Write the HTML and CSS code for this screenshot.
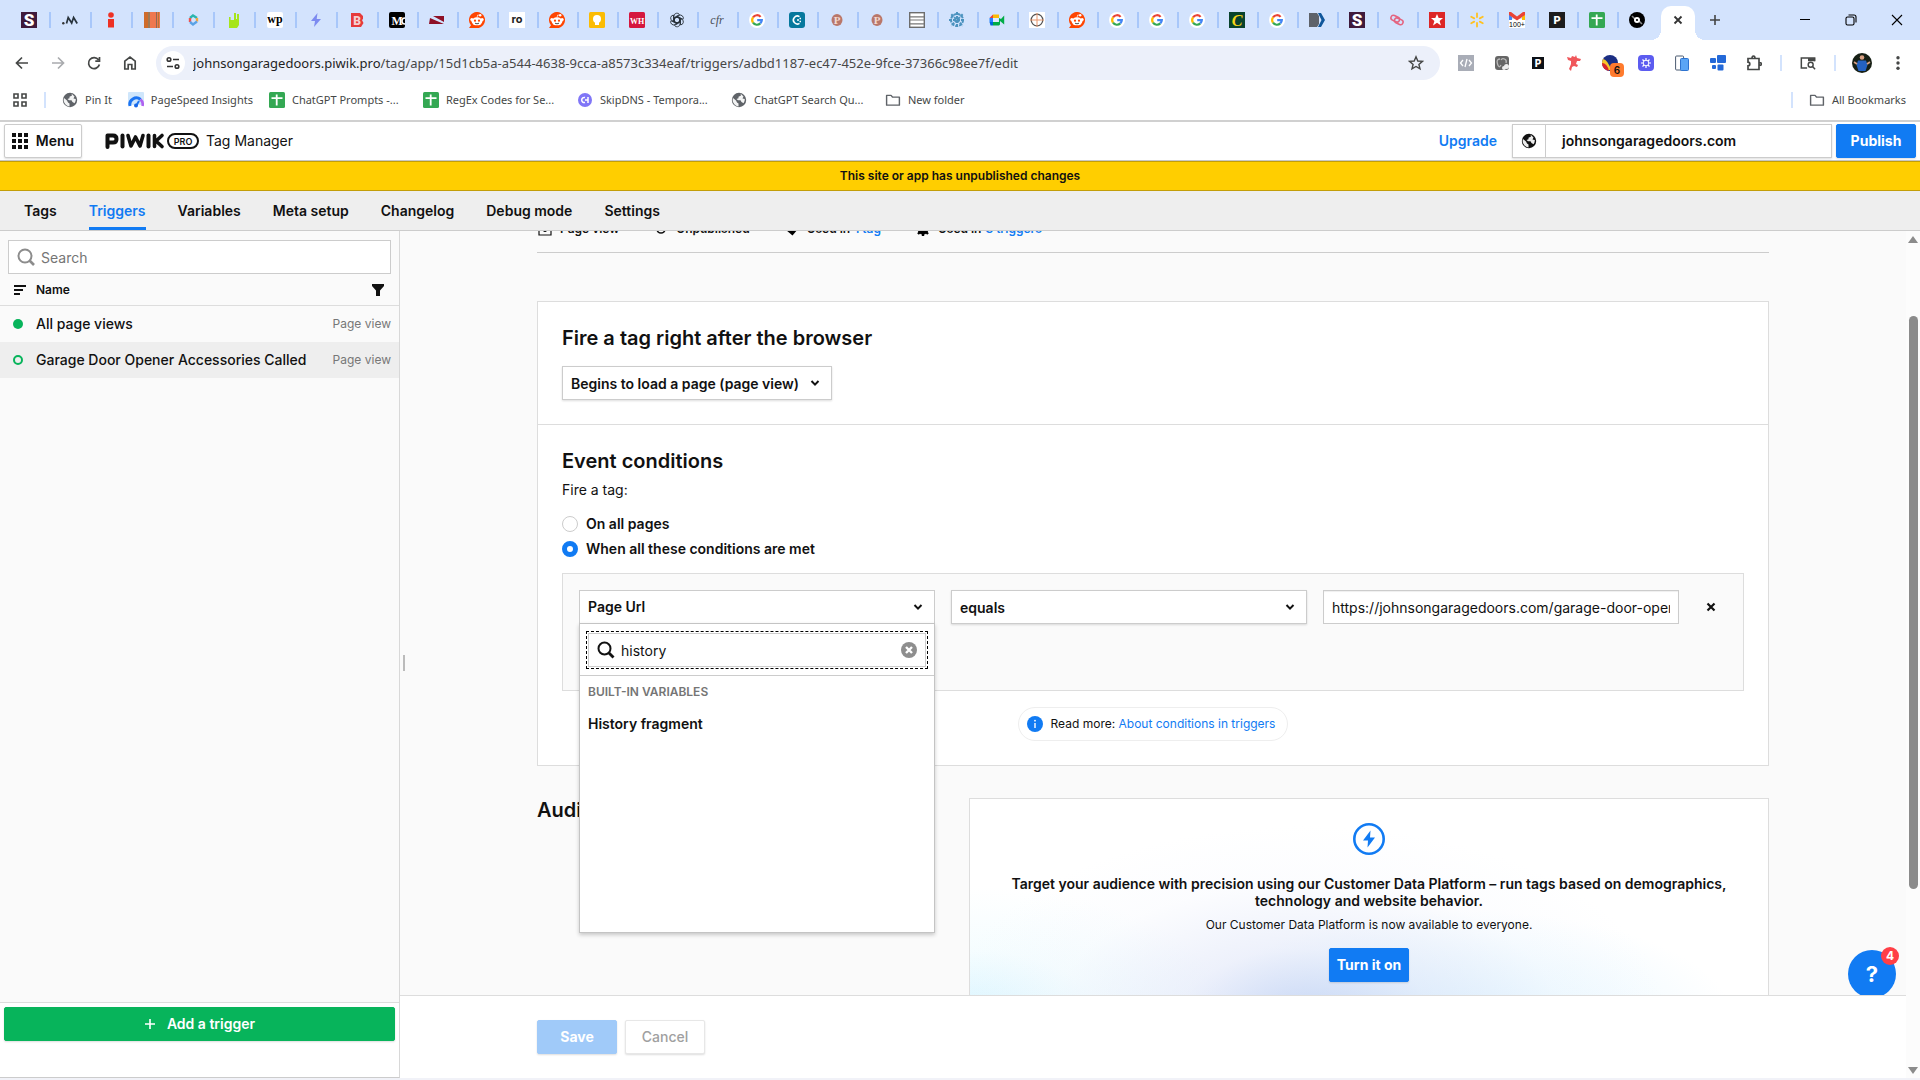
FILE: index.html
```html
<!DOCTYPE html>
<html lang="en">
<head>
<meta charset="utf-8">
<meta name="viewport" content="width=device-width, initial-scale=1">
<title>Piwik PRO Tag Manager</title>
<link rel="stylesheet" href="styles.css">
</head>
<body>
<svg class="sprite" aria-hidden="true">
  <symbol id="s-logo" viewBox="0 0 16 16"><rect width="16" height="16" fill="#3f1a3b"/><text x="8" y="14" text-anchor="middle" font-family="Roboto, sans-serif" font-weight="900" font-size="17" fill="#fff">S</text></symbol>
  <symbol id="google" viewBox="0 0 16 16"><circle cx="8" cy="8" r="8" fill="#fff"/><g fill="none" stroke-width="2.2"><path d="M4 5.3A4.8 4.8 0 0 1 11.6 4.9" stroke="#ea4335"/><path d="M4 10.7A4.9 4.9 0 0 1 4 5.3" stroke="#fbbc04"/><path d="M11.3 11.4A4.8 4.8 0 0 1 4 10.7" stroke="#34a853"/><path d="M8.2 8.2H12.8A4.8 4.8 0 0 1 11.3 11.4" stroke="#4285f4"/></g></symbol>
  <symbol id="reddit" viewBox="0 0 16 16"><path d="M0 16L2 13.3A8 8 0 1 1 8 16Z" fill="#ff4500"/><ellipse cx="8" cy="9.3" rx="5.4" ry="4" fill="#fff"/><circle cx="2.8" cy="7.4" r="1.5" fill="#fff"/><circle cx="13.2" cy="7.4" r="1.5" fill="#fff"/><circle cx="11.2" cy="3.2" r="1.2" fill="#fff"/><path d="M8 5.6L8.7 3L11 3.3" fill="none" stroke="#fff" stroke-width=".7"/><circle cx="6" cy="8.7" r="1.1" fill="#ff4500"/><circle cx="10" cy="8.7" r="1.1" fill="#ff4500"/><path d="M6 11.2Q8 12.4 10 11.2" fill="none" stroke="#222" stroke-width=".8"/></symbol>
  <symbol id="sheets" viewBox="0 0 16 16"><rect width="16" height="16" rx="1.5" fill="#34a853"/><path d="M2.5 6.2H13.5M7.7 2.5V13.5" stroke="#fff" stroke-width="1.8"/></symbol>
  <symbol id="globe" viewBox="0 0 16 16"><circle cx="8" cy="8" r="7.2" fill="currentColor"/><path d="M2 6L5 8.5L6 10.5L7.5 11.5V14.4A6.5 6.5 0 0 1 1.6 8ZM9.5 1.6L10 3.5L7.5 4.8V6.2L5.5 7L7 8.3H9.5L10.5 10L12.5 11.2A6 6 0 0 0 13.8 7L11.5 6.5L12.5 4.5Z" fill="#fff" opacity=".92"/></symbol>
  <symbol id="folder" viewBox="0 0 18 16"><path d="M1.8 2.8H6.8L8.6 4.8H16.2V13.8H1.8Z" fill="none" stroke="currentColor" stroke-width="1.6" stroke-linejoin="round"/></symbol>
  <symbol id="chevron" viewBox="0 0 10 10"><path d="M1.5 3L5 6.6L8.5 3" fill="none" stroke="currentColor" stroke-width="2"/></symbol>
  <symbol id="p-seal" viewBox="0 0 16 16"><ellipse cx="8" cy="8" rx="5.5" ry="6" fill="#b9776a"/><text x="8" y="12" text-anchor="middle" font-family="Liberation Serif, serif" font-weight="700" font-size="11" fill="#f3d9d3">P</text></symbol>
</svg>

<div class="tabstrip">
  <ul class="tabs">
    <li><svg><use href="#s-logo"/></svg></li>
    <li><svg viewBox="0 0 16 16"><circle cx="1.3" cy="11.3" r="1.2" fill="#333"/><path d="M4.5 11.5L6.2 5.5L9.7 11L11.6 5.5L15.2 11.5" fill="none" stroke="#28333c" stroke-width="1.7"/></svg></li>
    <li><svg viewBox="0 0 16 16"><circle cx="8" cy="3" r="2.8" fill="#ee3124"/><path d="M5 7H11V15.5H5Z" fill="#ee3124"/></svg></li>
    <li><svg viewBox="0 0 16 16"><rect width="16" height="16" fill="#ee7850"/><path d="M1 0V16M3 0V16" stroke="#c2671c" stroke-width="1.4"/><path d="M5 0V16" stroke="#7d7a55" stroke-width="1.4"/><path d="M12.5 0V16" stroke="#8e6a56" stroke-width="1"/><path d="M14.5 0V16" stroke="#b77a33" stroke-width="1"/></svg></li>
    <li><svg viewBox="0 0 16 16"><path d="M5 6L8 3.4L12 6" fill="none" stroke="#2bb5ad" stroke-width="2.4"/><path d="M12 6V9.5" stroke="#f4a63a" stroke-width="2.4"/><path d="M5 6V10" stroke="#ef5350" stroke-width="2.4"/><path d="M5 10L8 12.4L12 9.5" fill="none" stroke="#5aa2e6" stroke-width="2.4"/></svg></li>
    <li><svg viewBox="0 0 16 16"><path d="M3 5H4.600V8H8V1H10V7H11V2H13V13L11 16H3Z" fill="#a6e51b"/></svg></li>
    <li><svg viewBox="0 0 16 16"><rect width="16" height="16" rx="2" fill="#fff"/><text x="8" y="11" text-anchor="middle" font-family="Liberation Serif, serif" font-weight="700" font-size="12">wp</text></svg></li>
    <li><svg viewBox="0 0 16 16"><path d="M9.500 1L3 9H7L6 15L13 7H8.700Z" fill="#7d8bf0"/></svg></li>
    <li><svg viewBox="0 0 16 16"><path d="M2 1H11L14 4V7L13 8L14.500 11L12 15H2Z" fill="#e63b3b"/><text x="8" y="12.500" text-anchor="middle" font-family="Roboto, sans-serif" font-weight="900" font-size="12" fill="#f7cfd0">B</text></svg></li>
    <li><svg viewBox="0 0 16 16"><rect width="16" height="16" rx="2" fill="#000"/><text x="2.500" y="12.500" font-family="Liberation Serif, serif" font-weight="700" font-size="12" fill="#fff">M</text><path d="M16 6A3 3 0 0 0 16 12" fill="none" stroke="#fff" stroke-width="1.500"/></svg></li>
    <li><svg viewBox="0 0 16 16"><path d="M1 6L15 12H0ZM4 4H15V10Z" fill="#8e1026"/></svg></li>
    <li><svg><use href="#reddit"/></svg></li>
    <li><svg viewBox="0 0 16 16"><rect width="16" height="16" fill="#fff"/><text x="8" y="11" text-anchor="middle" font-family="Inter, sans-serif" font-weight="700" font-size="11" fill="#222">ro</text></svg></li>
    <li><svg><use href="#reddit"/></svg></li>
    <li><svg viewBox="0 0 16 16"><rect width="16" height="16" rx="1.500" fill="#fbbc04"/><circle cx="8" cy="7" r="4" fill="#fff"/><path d="M6 10H10V13H6Z" fill="#fff"/></svg></li>
    <li><svg viewBox="0 0 16 16"><rect width="16" height="16" rx="1.500" fill="#d5173e"/><text x="8" y="11.500" text-anchor="middle" font-family="Liberation Serif, serif" font-weight="700" font-size="8" fill="#fff">WH</text></svg></li>
    <li><svg viewBox="0 0 16 16" fill="none" stroke="#222b33" stroke-width=".8"><path id="petal" d="M5 9.700V4A3 3 0 0 1 10.500 2.500L5.500 5.400V9.700L8 11.200"/><use href="#petal" transform="rotate(60 8 8)"/><use href="#petal" transform="rotate(120 8 8)"/><use href="#petal" transform="rotate(180 8 8)"/><use href="#petal" transform="rotate(240 8 8)"/><use href="#petal" transform="rotate(300 8 8)"/></svg></li>
    <li><svg viewBox="0 0 16 16"><text x="8" y="11.500" text-anchor="middle" font-family="Liberation Serif, serif" font-style="italic" font-size="12" fill="#4b5059">cfr</text></svg></li>
    <li><svg><use href="#google"/></svg></li>
    <li><svg viewBox="0 0 16 16"><rect width="16" height="16" rx="3" fill="#06789d"/><path d="M10.500 4.600A4 4 0 1 0 10.500 11.400" fill="none" stroke="#fff" stroke-width="1.500"/><path d="M8 8H10M10.500 6.500H12M10.500 9.500H12" stroke="#fff" stroke-width="1.400"/></svg></li>
    <li><svg><use href="#p-seal"/></svg></li>
    <li><svg><use href="#p-seal"/></svg></li>
    <li><svg viewBox="0 0 16 16"><rect x=".7" y=".7" width="14.600" height="14.600" fill="#fff" stroke="#6d6d6d" stroke-width="1.400"/><path d="M1 4.800H15M1 8H15M1 11.800H15" stroke="#777" stroke-width="1.200"/></svg></li>
    <li><svg viewBox="0 0 16 16" stroke="#4c93bf" stroke-width="2" stroke-dasharray="3 1"><path d="M8 0V16M0 8H16M2.300 2.300L13.700 13.700M13.700 2.300L2.300 13.700"/><circle cx="8" cy="8" r="6" fill="none"/></svg></li>
    <li><svg viewBox="0 0 16 16"><path d="M4 2.500H10V6H4Z" fill="#fbbc04"/><path d="M.5 6L4 2.500V6Z" fill="#ea4335"/><path d="M.5 6H4V10H.5Z" fill="#2684fc"/><path d="M.5 10H4V13.500H1.500Z" fill="#0066da"/><path d="M4 10H10V6L12 7L15.200 3.500V12.500L11 9V12.500L10 13.500H4Z" fill="#00ac47"/><path d="M4 6H9V10H4Z" fill="#dfeaff"/></svg></li>
    <li><svg viewBox="0 0 16 16"><rect width="16" height="16" fill="#fff"/><circle cx="8" cy="8" r="5.800" fill="none" stroke="#555" stroke-width="1.300"/><path d="M8 1V15M1 8H15" stroke="#e8956d" stroke-width="1"/></svg></li>
    <li><svg><use href="#reddit"/></svg></li>
    <li><svg><use href="#google"/></svg></li>
    <li><svg><use href="#google"/></svg></li>
    <li><svg><use href="#google"/></svg></li>
    <li><svg viewBox="0 0 16 16"><rect width="16" height="16" fill="#09432c"/><text x="8" y="13.500" text-anchor="middle" font-family="Liberation Serif, serif" font-style="italic" font-weight="700" font-size="16" fill="#f5d516">C</text></svg></li>
    <li><svg><use href="#google"/></svg></li>
    <li><svg viewBox="0 0 16 16"><path d="M0 1H8L10 4V12L8 15H0Z" fill="#5e6269"/><path d="M9 1H12L16 8L12 15H9L12.500 8Z" fill="#10579b"/></svg></li>
    <li><svg><use href="#s-logo"/></svg></li>
    <li><svg viewBox="0 0 16 16" fill="none" stroke="#e4637f" stroke-width="1.500"><rect x="2" y="4" width="9" height="5" rx="2.500" transform="rotate(25 6 6)"/><rect x="5" y="7" width="9" height="5" rx="2.500" transform="rotate(25 10 10)"/></svg></li>
    <li><svg viewBox="0 0 16 16"><rect width="16" height="16" fill="#dd2626"/><path d="M8 2L9.700 6H14L10.600 8.900L12 13.500L8 10.800L4 13.500L5.400 8.900L2 6H6.300Z" fill="#fff"/></svg></li>
    <li><svg viewBox="0 0 16 16" stroke="#ffc220" stroke-width="1.800" stroke-linecap="round"><path d="M8 1.500V5M8 11V14.500M2.200 4.800L5.200 6.400M10.800 9.600L13.800 11.200M2.200 11.200L5.200 9.600M10.800 6.400L13.800 4.800"/></svg></li>
    <li><svg viewBox="0 0 16 16"><rect y="7" width="16" height="9" fill="#fff"/><path d="M0 2V8H3V5Z" fill="#4285f4"/><path d="M16 2V8H13V5Z" fill="#fbbc04"/><path d="M0 0H2L8 4.500L14 0H16V3L8 8.500L0 3Z" fill="#ea4335"/><text x="8" y="15" text-anchor="middle" font-family="Liberation Sans, sans-serif" font-size="7">100+</text></svg></li>
    <li><svg viewBox="0 0 16 16"><rect width="16" height="16" fill="#1d1d1d"/><text x="8" y="12" text-anchor="middle" font-family="Inter, sans-serif" font-weight="800" font-size="11" fill="#fff">P</text></svg></li>
    <li><svg><use href="#sheets"/></svg></li>
    <li><svg viewBox="0 0 16 16"><circle cx="8" cy="8" r="8"/><path d="M3 4L6 7M10 9L13 12" stroke="#888" stroke-width="1.600"/><circle cx="8" cy="8" r="3" fill="#fff"/><circle cx="8" cy="8" r="1.100"/></svg></li>
  </ul>
  <div class="active-tab"><svg viewBox="0 0 16 16"><path d="M4.500 4.500L11.500 11.500M11.500 4.500L4.500 11.500" stroke="#333" stroke-width="1.800"/></svg></div>
  <button class="plain new-tab" aria-label="New tab"><svg viewBox="0 0 16 16"><path d="M8 3V13M3 8H13" stroke="#444" stroke-width="1.600"/></svg></button>
  <div class="window-buttons">
    <button class="plain" aria-label="Minimize"><svg viewBox="0 0 16 16"><path d="M3 7.500H13" stroke="#000"/></svg></button>
    <button class="plain" aria-label="Restore"><svg viewBox="0 0 16 16" fill="none" stroke="#000" stroke-width="1.100"><rect x="3" y="5" width="8" height="8" rx="1.500"/><path d="M5.500 3H11Q13 3 13 5V10.500"/></svg></button>
    <button class="plain" aria-label="Close"><svg viewBox="0 0 16 16"><path d="M3 3L13 13M13 3L3 13" stroke="#000" stroke-width="1.100"/></svg></button>
  </div>
</div>

<div class="toolbar">
  <div class="nav-buttons">
    <button class="plain" aria-label="Back"><svg viewBox="0 0 16 16"><path d="M14 8H3M8 2.500L2.500 8L8 13.500" fill="none" stroke="#454746" stroke-width="1.700"/></svg></button>
    <button class="plain" aria-label="Forward"><svg viewBox="0 0 16 16"><path d="M2 8H13M8 2.500L13.500 8L8 13.500" fill="none" stroke="#a9abae" stroke-width="1.700"/></svg></button>
    <button class="plain" aria-label="Reload"><svg viewBox="0 0 16 16"><path d="M13.400 9.500A5.500 5.500 0 1 1 12.500 4.800M13.500 2V6.200H9.300" fill="none" stroke="#454746" stroke-width="1.700"/></svg></button>
    <button class="plain" aria-label="Home"><svg viewBox="0 0 16 16"><path d="M2.800 14V6.200L8 2L13.200 6.200V14H9.800V9.500H6.200V14Z" fill="none" stroke="#454746" stroke-width="1.700"/></svg></button>
  </div>
  <div class="omnibox">
    <span class="site-info"><svg viewBox="0 0 16 16" fill="none" stroke="#333" stroke-width="1.600"><circle cx="4" cy="4.500" r="1.800"/><path d="M8 4.500H14M2 11.500H8"/><circle cx="12" cy="11.500" r="1.800"/></svg></span>
    <span class="url"><b>johnsongaragedoors.piwik.pro</b>/tag/app/15d1cb5a-a544-4638-9cca-a8573c334eaf/triggers/adbd1187-ec47-452e-9fce-37366c98ee7f/edit</span>
    <svg viewBox="0 0 16 16"><path d="M8 1.800L9.800 6L14.400 6.400L10.900 9.400L12 13.900L8 11.500L4 13.900L5.100 9.400L1.600 6.400L6.200 6Z" fill="none" stroke="#454746" stroke-width="1.400"/></svg>
  </div>
  <div class="extensions">
    <svg viewBox="0 0 16 16"><rect width="16" height="16" fill="#a9adb7"/><path d="M5 5L2.500 8L5 11M11 5L13.500 8L11 11M9 4L7 12" fill="none" stroke="#fff" stroke-width="1.300"/></svg>
    <svg viewBox="0 0 16 16"><rect x="1" y="1" width="14" height="14" rx="3" fill="#666"/><path d="M6 4Q2 4 3.500 9T7 10M7 5Q8 3 10.500 4T12 8" fill="none" stroke="#bbb" stroke-width="1.300"/><circle cx="12.500" cy="11.500" r="2.500" fill="#eee"/><circle cx="10" cy="13" r="2" fill="#eee"/></svg>
    <svg viewBox="0 0 16 16"><rect x="2" y="2" width="12" height="12" fill="#0d1117"/><text x="8" y="12" text-anchor="middle" font-family="Inter, sans-serif" font-weight="800" font-size="10" fill="#fff">P</text></svg>
    <svg viewBox="0 0 16 16"><path d="M1 2L5 3L6 1L9 2L10 0L11 3L15 4L14 6L11 6L10 9L12 10L11 12L8 11L6 12L5 16L3 14L5 9L5 6L2 5Z" fill="#f0575b"/></svg>
    <span class="ext-badged"><svg viewBox="0 0 16 16"><circle cx="8" cy="8" r="8" fill="#1b2e83"/><path d="M1 4Q6 5 9 15L5 15A8 8 0 0 1 1 4" fill="#f7c52c"/><path d="M0 8Q5 8 7 16A8 8 0 0 1 0 8" fill="#d9232e"/></svg><span class="ext-count">6</span></span>
    <svg viewBox="0 0 16 16"><rect width="16" height="16" rx="4" fill="#5c5cf0"/><path d="M8 3V13M3 8H13M4.500 4.500L11.500 11.500M11.500 4.500L4.500 11.500" stroke="#fff" stroke-width="1.200"/><circle cx="8" cy="8" r="2.800" fill="#5c5cf0" stroke="#fff"/></svg>
    <svg viewBox="0 0 16 16"><rect x="1.600" y="1" width="8" height="14" rx="1" fill="#fff" stroke="#4a5a70"/><rect x="6.500" y="3.500" width="8" height="12" rx="1" fill="#5aa5f5" stroke="#2d73d0"/></svg>
    <svg viewBox="0 0 16 16" fill="#2469d8"><rect x="7" y="0" width="9" height="8" rx="1"/><rect y="3" width="6" height="5" rx="1"/><rect x="2" y="10" width="4" height="4" rx="1"/><rect x="7.500" y="9.500" width="6" height="6" rx="1"/></svg>
    <svg viewBox="0 0 16 16"><path d="M2 3.500H13V14.500H2V10.800A1.800 1.800 0 0 0 2 7.200ZM6 3.500Q6 1 7.500 1T9 3.500M13 7.500Q15.500 7.500 15.500 9T13 10.500" fill="none" stroke="#454746" stroke-width="1.700"/></svg>
    <i class="rule"></i>
    <svg viewBox="0 0 18 16"><path d="M8 13.500H1.500V2.500H16.500V6" fill="none" stroke="#454746" stroke-width="1.700"/><path d="M9 2.500H17V6H9Z" fill="#454746"/><circle cx="12" cy="10" r="2.800" fill="none" stroke="#454746" stroke-width="1.600"/><path d="M14 12L17 15" stroke="#454746" stroke-width="1.700"/></svg>
    <i class="rule"></i>
    <svg class="avatar" viewBox="0 0 20 20"><circle cx="10" cy="10" r="10" fill="#172016"/><circle cx="10" cy="4.500" r="2.300" fill="#d9a184"/><path d="M6 7.500H14L15.500 12L13.500 18H6.500L4.500 12Z" fill="#2462c2"/><path d="M2 9L5 11M18 9L15 11" stroke="#d9a184" stroke-width="1.800"/></svg>
    <svg viewBox="0 0 16 16" fill="#454746"><circle cx="8" cy="2.700" r="1.700"/><circle cx="8" cy="8" r="1.700"/><circle cx="8" cy="13.300" r="1.700"/></svg>
  </div>
</div>

<div class="bookmarks">
  <svg viewBox="0 0 16 16" fill="none" stroke="#454746" stroke-width="1.600"><path d="M2 2H6V6H2ZM10 2H14V6H10ZM2 10H6V14H2ZM10 10H14V14H10Z"/></svg>
  <i class="rule"></i>
  <a href="#"><svg><use href="#globe"/></svg>Pin It</a>
  <a href="#"><svg viewBox="0 0 16 16"><rect width="16" height="13" rx="1" fill="#cfe6fb"/><path d="M2 14A6.500 6.500 0 0 1 12.500 7.500" fill="none" stroke="#1b74f2" stroke-width="3"/><path d="M12.500 7.500A6.500 6.500 0 0 1 14.500 14" fill="none" stroke="#b061f0" stroke-width="2.600"/><path d="M8 14L11 9" stroke="#1b74f2" stroke-width="2"/><circle cx="8" cy="13.500" r="2" fill="#1666e8"/></svg>PageSpeed Insights</a>
  <a href="#" class="cut"><svg><use href="#sheets"/></svg>ChatGPT Prompts -...</a>
  <a href="#" class="cut"><svg><use href="#sheets"/></svg>RegEx Codes for Se...</a>
  <a href="#" class="cut"><svg viewBox="0 0 16 16"><circle cx="8" cy="8" r="7" fill="#8076f7"/><path d="M8 5.500A2.600 2.600 0 1 0 8 10.500M8 8H11M11 5V11" fill="none" stroke="#fff" stroke-width="1.500"/></svg>SkipDNS - Tempora...</a>
  <a href="#" class="cut"><svg><use href="#globe"/></svg>ChatGPT Search Qu...</a>
  <a href="#"><svg><use href="#folder"/></svg>New folder</a>
  <span class="spacer"></span>
  <i class="rule"></i>
  <a href="#"><svg><use href="#folder"/></svg>All Bookmarks</a>
</div>

<header class="app-header">
  <button class="btn menu-btn"><svg viewBox="0 0 16 16" fill="#111"><path d="M0 0H4V4H0ZM6 0H10V4H6ZM12 0H16V4H12ZM0 6H4V10H0ZM6 6H10V10H6ZM12 6H16V10H12ZM0 12H4V16H0ZM6 12H10V16H6ZM12 12H16V16H12Z"/></svg>Menu</button>
  <svg class="logo" viewBox="0 0 94 18" role="img" aria-label="Piwik PRO"><g fill="none" stroke="#111" stroke-width="4" stroke-linejoin="round" stroke-linecap="round"><path d="M2.500 15V3.500H8Q11.500 3.500 11.500 7T8 10.500H4"/><path d="M17.500 3.500V14.500"/><path d="M23 3.500L26 14L30.500 5L35 14L38 3.500" stroke-width="3.600"/><path d="M43.500 3.500V14.500"/><path d="M49.500 3.500V14.500M57 3.500L51 9L57 14.500" stroke-width="3.600"/></g><rect x="63" y="2" width="30" height="14" rx="7" fill="#fff" stroke="#111" stroke-width="2"/><text x="78" y="12.500" text-anchor="middle" font-family="Inter, sans-serif" font-weight="600" font-size="9" fill="#111">PRO</text></svg>
  <span class="product">Tag Manager</span>
  <a href="#" class="upgrade">Upgrade</a>
  <div class="site-picker">
    <span class="site-icon"><svg><use href="#globe"/></svg></span>
    <button class="site-name">johnsongaragedoors.com</button>
  </div>
  <button class="btn primary publish">Publish</button>
</header>
<div class="notice">This site or app has unpublished changes</div>
<nav class="app-nav">
  <a href="#">Tags</a><a href="#" class="current">Triggers</a><a href="#">Variables</a><a href="#">Meta setup</a><a href="#">Changelog</a><a href="#">Debug mode</a><a href="#">Settings</a>
</nav>

<div class="workspace">
  <aside class="sidebar">
    <div class="side-search"><svg viewBox="0 0 18 18" fill="none" stroke="#8c8c8c"><circle cx="8" cy="8" r="6.500" stroke-width="2"/><path d="M12.500 12.500L17 17" stroke-width="2.600"/></svg><input type="search" placeholder="Search" aria-label="Search triggers"></div>
    <div class="side-head"><svg viewBox="0 0 12 12"><path d="M0 2H12M0 6H9M0 10H6" stroke="#111" stroke-width="2"/></svg><span>Name</span><button class="plain" aria-label="Filter"><svg viewBox="0 0 12 12"><path d="M0 0H12V2L8 6.500V12H4V6.500L0 2Z" fill="#111"/></svg></button></div>
    <ul class="trigger-list">
      <li><i class="dot"></i><span>All page views</span><small>Page view</small></li>
      <li class="selected"><i class="dot hollow"></i><span>Garage Door Opener Accessories Called</span><small>Page view</small></li>
    </ul>
    <div class="side-foot"><button class="btn add"><svg viewBox="0 0 12 12"><path d="M6 1V11M1 6H11" stroke="#fff" stroke-width="1.600"/></svg>Add a trigger</button></div>
  </aside>

  <main class="editor">
    <i class="splitter"></i>
    <div class="scroll">
      <div class="content">
        <div class="meta">
          <span><svg viewBox="0 0 14 14"><path d="M1 1H13V13H1Z" fill="none" stroke="#111" stroke-width="1.200"/><circle cx="7" cy="8" r="2"/></svg>Page view</span>
          <span><svg viewBox="0 0 14 14"><circle cx="7" cy="7" r="4" fill="none" stroke="#111" stroke-width="1.600"/></svg>Unpublished</span>
          <span><svg viewBox="0 0 14 14"><path d="M1 1H8L13 7L7.500 13.500L1 8Z"/></svg>Used in <a href="#">1 tag</a></span>
          <span><svg viewBox="0 0 14 14"><circle cx="7" cy="7" r="5.500"/><path d="M7 0V14M0 7H14M2 2L12 12M12 2L2 12" stroke="#000" stroke-width="2.400"/></svg>Used in <a href="#">3 triggers</a></span>
        </div>
        <div class="card">
          <section>
            <h2>Fire a tag right after the browser</h2>
            <div class="select event-select"><select aria-label="Browser event"><option>Begins to load a page (page view)</option></select><svg><use href="#chevron"/></svg></div>
          </section>
          <section class="conditions">
            <h2>Event conditions</h2>
            <p>Fire a tag:</p>
            <label><input type="radio" name="scope">On all pages</label>
            <label><input type="radio" name="scope" checked>When all these conditions are met</label>
            <div class="condition-box">
              <div class="condition">
                <div class="combo">
                  <button class="combo-btn">Page Url<svg><use href="#chevron"/></svg></button>
                  <div class="combo-menu">
                    <div class="combo-search"><div class="combo-field"><svg viewBox="0 0 18 18" fill="none" stroke="#111"><circle cx="7.500" cy="7.500" r="6" stroke-width="2"/><path d="M12 12L16.500 16.500" stroke-width="2.800"/></svg><input type="text" value="history" aria-label="Search variables"><button class="plain" aria-label="Clear"><svg viewBox="0 0 16 16"><circle cx="8" cy="8" r="8" fill="#8e8e8e"/><path d="M5 5L11 11M11 5L5 11" stroke="#fff" stroke-width="2.400"/></svg></button></div></div>
                    <div class="group-label">BUILT-IN VARIABLES</div>
                    <a href="#" class="option">History fragment</a>
                  </div>
                </div>
                <div class="select"><select aria-label="Operator"><option>equals</option></select><svg><use href="#chevron"/></svg></div>
                <input class="value" type="text" aria-label="Value" value="https://johnsongaragedoors.com/garage-door-opener-accessories/">
                <button class="plain" aria-label="Remove condition"><svg viewBox="0 0 10 10"><path d="M1.500 1.500L8.500 8.500M8.500 1.500L1.500 8.500" stroke="#111" stroke-width="2.200"/></svg></button>
              </div>
            </div>
            <div class="read-more"><svg viewBox="0 0 16 16"><circle cx="8" cy="8" r="8" fill="#117bf3"/><path d="M8 7V12" stroke="#fff" stroke-width="1.400"/><circle cx="8" cy="4.700" r=".9" fill="#fff"/></svg><span>Read more: <a href="#">About conditions in triggers</a></span></div>
          </section>
        </div>
        <div class="audience">
          <h2>Audience</h2>
          <div class="promo">
            <svg viewBox="0 0 32 32"><circle cx="16" cy="16" r="14.700" fill="none" stroke="#117bf3" stroke-width="2.600"/><path d="M17.500 7.500L10 17.500H15L14.500 24.500L22 14.500H17Z" fill="#117bf3"/></svg>
            <h3>Target your audience with precision using our Customer Data Platform – run tags based on demographics, technology and website behavior.</h3>
            <p>Our Customer Data Platform is now available to everyone.</p>
            <button class="btn primary turn-on">Turn it on</button>
          </div>
        </div>
      </div>
      <button class="help" aria-label="Help, 4 new">?<span>4</span></button>
    </div>
    <div class="edit-foot"><div class="content"><button class="btn primary save" disabled>Save</button><button class="btn cancel" disabled>Cancel</button></div></div>
  </main>
  <div class="scrollbar" aria-hidden="true"><i class="up"></i><i class="track"><b></b></i><i class="down"></i></div>
</div>
</body>
</html>
```
FILE: styles.css
```css
* { box-sizing: border-box; }
body { margin: 0; height: 100vh; display: flex; flex-direction: column; overflow: hidden; background: #f0f0f7; color: #111; font: 14px/20px Inter, sans-serif; border-bottom: 2px solid #f1f2f8; }
ul { list-style: none; margin: 0; padding: 0; }
h2, h3, p { margin: 0; }
h2 { font-size: 20px; line-height: 24px; font-weight: 600; font-optical-sizing: none; }
a { color: #117bf3; text-decoration: none; }
svg { display: block; flex: none; width: 16px; height: 16px; }
.sprite { display: none; }
button, input, select { font: inherit; color: inherit; }
.plain { display: flex; align-items: center; justify-content: center; padding: 0; border: 0; background: none; }
.spacer { flex: 1; }
.rule { width: 2px; height: 16px; background: #d3e3fd; }

/* Browser tabs */
.tabstrip { flex: none; display: flex; height: 40px; padding-left: 8px; background: #d3e3fd; }
.tabs { display: flex; }
.tabs li { display: flex; align-items: center; justify-content: center; width: 40px; height: 40px; position: relative; }
.tabs li:nth-child(-n+9) { width: 41px; }
.tabs li:not(:last-child)::after { content: ""; position: absolute; right: -2px; top: 12px; width: 2px; height: 16px; background: #a8c7fa; }
.active-tab { display: flex; align-items: center; justify-content: center; position: relative; width: 34px; height: 34px; margin: 6px 0 0 4px; padding-bottom: 6px; border-radius: 10px 10px 0 0; background: #fff; }
.active-tab::before, .active-tab::after { content: ""; position: absolute; bottom: 0; width: 10px; height: 10px; }
.active-tab::before { right: 100%; background: radial-gradient(circle at 0 0, #d3e3fd 10px, #fff 10px); }
.active-tab::after { left: 100%; background: radial-gradient(circle at 100% 0, #d3e3fd 10px, #fff 10px); }
.new-tab { width: 40px; height: 40px; }
.window-buttons { display: flex; margin-left: auto; }
.window-buttons .plain { width: 46px; height: 40px; }

/* Address row */
.toolbar { flex: none; display: flex; align-items: center; height: 46px; background: #fff; }
.nav-buttons { display: flex; width: 156px; padding-left: 4px; }
.nav-buttons .plain { width: 36px; height: 36px; }
.omnibox { flex: 1; display: flex; align-items: center; gap: 8px; min-width: 0; height: 34px; padding: 0 16px 0 5px; border-radius: 17px; background: #ecf0fa; }
.site-info { display: flex; align-items: center; justify-content: center; width: 24px; height: 24px; border-radius: 50%; background: #fff; }
.url { flex: 1; font: 13px/20px "Noto Sans", sans-serif; color: #474747; white-space: nowrap; overflow: hidden; }
.url b { font-weight: 400; color: #1f1f1f; }
.extensions { display: flex; align-items: center; gap: 20px; padding: 0 14px 0 18px; }
.extensions .rule { margin: 0 -2px; }
.extensions .avatar { width: 20px; height: 20px; margin: 0 -2px; }
.ext-badged { position: relative; }
.ext-count { position: absolute; left: 8px; top: 8px; width: 14px; height: 14px; border-radius: 4px; background: #ff7b2e; font: 600 10px/14px Inter, sans-serif; text-align: center; }

.bookmarks { flex: none; display: flex; align-items: center; gap: 16px; height: 34px; padding: 0 14px 6px 12px; background: #fff; font: 11px/16px "Noto Sans", sans-serif; }
.bookmarks a { display: flex; align-items: center; gap: 7px; color: #454746; white-space: nowrap; }
.bookmarks .cut { min-width: 138px; }
.bookmarks a svg { color: #5f6368; }

/* Application header */
.app-header { flex: none; display: flex; align-items: center; height: 41px; padding: 0 4px; background: #fff; border-top: 2px solid #d0d0d0; border-bottom: 1px solid #c8c8c8; }
.btn { display: flex; align-items: center; justify-content: center; height: 34px; padding: 0 8px; border: 1px solid #ccc; border-radius: 2px; background: #fff; font-weight: 600; white-space: nowrap; box-shadow: 0 1px 2px #0002; }
.btn.primary { border-color: #117bf3; background: #117bf3; color: #fff; font-weight: 700; }
.menu-btn { width: 78px; gap: 8px; padding: 0; }
.logo { width: 94px; height: 18px; margin-left: 23px; }
.product { margin-left: 7px; }
.upgrade { margin-left: auto; font-weight: 600; }
.site-picker { display: flex; width: 320px; height: 34px; margin: 0 4px 0 15px; border: 1px solid #ccc; box-shadow: 0 1px 2px #0002; }
.site-icon { display: flex; align-items: center; justify-content: center; width: 33px; border-right: 1px solid #ccc; }
.site-name { flex: 1; padding: 0 16px; border: 0; background: #fff; font-weight: 600; text-align: left; }
.publish { width: 80px; }
.notice { flex: none; height: 30px; border: 1px solid #c39e08; border-width: 1px 0; background: #ffce00; font: 600 12px/28px Inter, sans-serif; text-align: center; }
.app-nav { flex: none; display: flex; gap: 32px; height: 40px; padding: 0 24px; border-bottom: 1px solid #ccc; background: #eee; }
.app-nav a { color: #111; font-weight: 600; line-height: 39px; }
.app-nav .current { color: #117bf3; box-shadow: inset 0 -3px #117bf3; }

/* Trigger list */
.workspace { flex: 1; display: flex; min-height: 0; background: #fafafa; }
.sidebar { display: flex; flex-direction: column; width: 400px; border-right: 1px solid #d8d8d8; border-bottom: 1px solid #ccc; }
.side-search { display: flex; align-items: center; gap: 6px; height: 34px; margin: 9px 8px 0; padding: 0 8px; border: 1px solid #ccc; background: #fff; }
.side-search svg { width: 18px; height: 18px; }
.side-search input { flex: 1; min-width: 0; padding: 2px 0 0; border: 0; outline: 0; background: none; }
.side-search ::placeholder { color: #757575; opacity: 1; }
.side-head { display: flex; align-items: center; gap: 10px; height: 32px; padding: 0 15px 0 14px; border-bottom: 1px solid #ddd; font-size: 12px; font-weight: 600; }
.side-head svg { width: 12px; height: 12px; }
.side-head .plain { margin-left: auto; }
.trigger-list { flex: 1; }
.trigger-list li { display: flex; align-items: center; height: 36px; padding: 0 8px 0 13px; font-weight: 500; }
.trigger-list small { margin-left: auto; color: #777; font-size: 12px; font-weight: 400; }
.trigger-list .selected { background: #eee; }
.dot { width: 10px; height: 10px; margin-right: 13px; border-radius: 50%; background: #07b45b; }
.dot.hollow { border: 2px solid #07b45b; background: none; }
.side-foot { height: 75px; padding: 4px; border-top: 1px solid #ddd; background: #fff; }
.btn.add { width: 100%; gap: 11px; border-color: #07b45b; background: #07b45b; color: #fff; }
.add svg { width: 12px; height: 12px; }

/* Editor */
.editor { flex: 1; display: flex; flex-direction: column; min-width: 0; position: relative; }
.splitter { position: absolute; left: 3px; top: 50%; width: 2px; height: 16px; background: #bbb; }
.scroll { flex: 1; min-height: 0; overflow: clip; position: relative; }
.content { width: calc(100% - 274px); max-width: 1232px; margin: 0 auto; }
.meta { display: flex; align-items: center; height: 36px; margin-top: -14px; border-bottom: 1px solid #ccc; padding-bottom: 11px; font-size: 12px; font-weight: 600; }
.meta span { display: flex; align-items: center; gap: 4px; margin-right: 34px; }
.meta svg { width: 14px; height: 14px; margin: 0 4px 0 1px; }
.card { margin-top: 48px; border: 1px solid #ddd; background: #fff; }
.card section { padding: 24px; }
.card section + section { border-top: 1px solid #ddd; }
.select { display: grid; align-items: center; height: 34px; }
.select select, .select svg { grid-area: 1 / 1; }
.select select { width: 100%; height: 34px; padding: 2px 8px 0; border: 1px solid #ccc; border-radius: 0; appearance: none; background: #fff; font-weight: 600; box-shadow: 0 1px 2px #0002; }
.select svg { justify-self: end; width: 10px; height: 10px; margin-right: 12px; pointer-events: none; }
.event-select { width: 270px; margin-top: 16px; }
.conditions p { margin-top: 7px; }
.conditions label { display: flex; align-items: center; gap: 8px; height: 25px; font-weight: 600; }
.conditions p + label { margin-top: 11px; }
.conditions [type=radio] { appearance: none; width: 16px; height: 16px; margin: 0; border: 1px solid #ccc; border-radius: 50%; background: #fff; }
.conditions [type=radio]:checked { border: 5px solid #117bf3; }
.condition-box { height: 118px; margin-top: 12px; padding: 16px; border: 1px solid #ddd; background: #fafafa; }
.condition { display: grid; grid-template-columns: 1fr 1fr 1fr 32px; gap: 16px; }
.condition > .plain svg { width: 10px; height: 10px; }
.combo { position: relative; }
.combo-btn { display: flex; align-items: center; justify-content: space-between; width: 100%; height: 34px; padding: 0 11px 0 8px; border: 1px solid #ccc; background: #fff; font-weight: 600; }
.combo-btn svg { width: 10px; height: 10px; }
.combo-menu { position: absolute; z-index: 2; left: 0; right: 0; top: 33px; height: 310px; border: 1px solid #c4c4c4; background: #fff; box-shadow: 0 2px 4px #0003; }
.combo-search { height: 52px; padding: 9px 8px; border-bottom: 1px solid #ccc; }
.combo-field { display: flex; align-items: center; gap: 6px; height: 34px; padding: 0 8px; border: 1px solid #ccc; outline: 1px dashed #000; outline-offset: 1px; }
.combo-field svg { width: 18px; height: 18px; }
.combo-field .plain svg { width: 16px; height: 16px; }
.combo-field input { flex: 1; min-width: 0; padding: 2px 0 0; border: 0; outline: 0; }
.group-label { padding: 0 8px; color: #757575; font: 600 12px/32px Inter, sans-serif; }
.option { display: block; padding: 0 8px; color: #111; font-weight: 600; line-height: 32px; }
.value { min-width: 0; height: 34px; padding: 0 8px; border: 1px solid #ccc; background: #fff; box-shadow: inset 0 1px 1px #0001; }
.read-more { display: flex; align-items: center; gap: 8px; width: max-content; height: 34px; margin: 16px auto 0; padding: 0 12px 0 8px; border: 1px solid #eee; border-radius: 17px; font-size: 12px; }
.audience { display: grid; grid-template-columns: 1fr 800px; margin-top: 32px; }
.promo { display: flex; flex-direction: column; align-items: center; height: 260px; padding: 24px 32px; border: 1px solid #ddd; background: radial-gradient(ellipse 360px 190px at 42% 84%, #b4c6f0aa 0%, #d3dcf666 35%, #eef2fc33 70%, #fff0 100%), radial-gradient(ellipse 260px 130px at 0% 84%, #cff2ffcc 0%, #e6fafe66 50%, #fff0 100%), radial-gradient(ellipse 270px 110px at 62% 86%, #cdeeff99 0%, #fff0 100%), #fff; text-align: center; }
.promo svg { width: 32px; height: 32px; }
.promo h3 { margin-top: 20px; font-size: 14px; line-height: 17px; font-weight: 600; }
.promo p { margin-top: 6px; font-size: 12px; }
.turn-on { width: 80px; margin-top: 13px; padding: 0; }
.help { position: absolute; right: 10px; bottom: -3px; width: 48px; height: 48px; padding: 0; border: 0; border-radius: 50%; background: #117bf3; color: #fff; font-size: 22px; font-weight: 700; }
.help span { position: absolute; right: -3px; top: -3px; width: 18px; height: 18px; border-radius: 50%; background: #ff3f46; font-size: 12px; line-height: 18px; }
.edit-foot { flex: none; height: 83px; padding-top: 24px; border-top: 1px solid #ddd; background: #fff; }
.edit-foot .content { display: flex; gap: 8px; }
.edit-foot .btn { width: 80px; }
.btn.save { border-color: #a0caf9; background: #a0caf9; }
.btn.cancel { border-color: #e7e7e7; color: #a0a0a0; font-weight: 500; }
.scrollbar { display: flex; flex-direction: column; align-items: center; width: 14px; padding: 5px 0 4px; background: #fcfcfc; }
.up, .down { border: 5px solid transparent; border-top: 0; border-bottom: 7px solid #8b8b8b; }
.down { transform: rotate(180deg); }
.track { flex: 1; display: flex; flex-direction: column; width: 9px; padding: 73px 0 178px; }
.track b { flex: 1; border-radius: 5px; background: #8b8b8b; }
```
